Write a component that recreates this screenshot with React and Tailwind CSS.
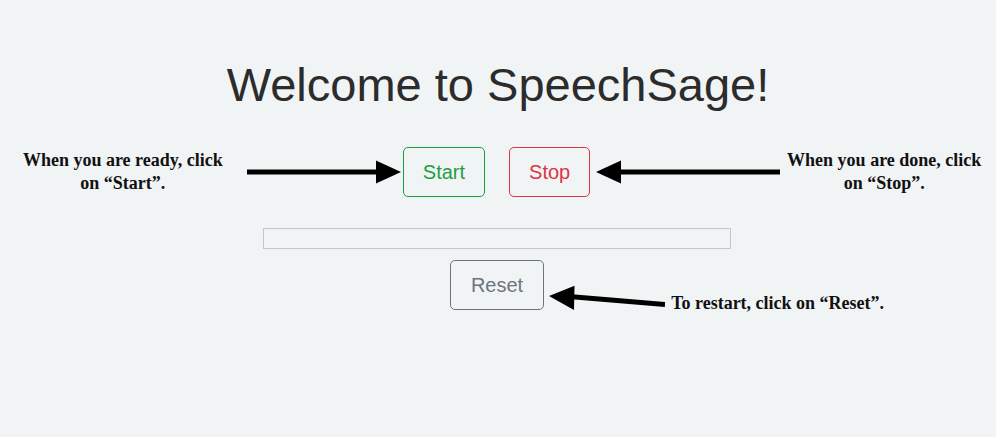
const sans = { fontFamily: '"Liberation Sans", Arial, sans-serif' }

function ArrowRight() {
  return (
    <svg width="154" height="24" viewBox="0 0 154 24" className="block">
      <rect x="0" y="9.5" width="132" height="5" fill="#000" />
      <polygon points="129,0.5 154,12 129,23.5" fill="#000" />
    </svg>
  )
}

function ArrowLeft() {
  return (
    <svg width="184" height="24" viewBox="0 0 184 24" className="block">
      <rect x="22" y="9.5" width="162" height="5" fill="#000" />
      <polygon points="25,0.5 0,12 25,23.5" fill="#000" />
    </svg>
  )
}

function ArrowReset() {
  return (
    <svg width="116" height="26" viewBox="0 0 116 26" className="block">
      <line x1="20" y1="11.6" x2="116" y2="19.5" stroke="#000" strokeWidth="5" />
      <polygon points="0,11 25.5,0.7 25,25" fill="#000" />
    </svg>
  )
}

export default function App() {
  return (
    <div className="min-h-screen w-full bg-[#f1f4f5] pt-[58px]" style={sans}>
      {/* Title */}
      <h1 className="text-center text-[47px] leading-[54px] font-normal text-[#2c2c2c]">
        Welcome to SpeechSage!
      </h1>

      {/* Start / Stop row */}
      <div className="mt-[35px] grid grid-cols-[1fr_auto_1fr] items-center">
        <div className="flex items-center justify-end">
          <p className="w-[200px] text-center font-['Liberation_Serif',serif] text-[18px] font-bold leading-[23px] text-[#111]">
            When you are ready, click on “Start”.
          </p>
          <div className="ml-[24px] mr-[2px]">
            <ArrowRight />
          </div>
        </div>
        <div className="mr-[3px] flex items-center gap-[24px]">
          <button className="h-[50px] rounded-[5px] border border-[#1f9d45] px-[19px] text-[20px] text-[#1f9d45]">
            Start
          </button>
          <button className="h-[50px] rounded-[5px] border border-[#dc3545] px-[19px] text-[20px] text-[#dc3545]">
            Stop
          </button>
        </div>
        <div className="flex items-center">
          <div className="ml-[3px]">
            <ArrowLeft />
          </div>
          <p className="ml-[5px] w-[198px] text-center font-['Liberation_Serif',serif] text-[18px] font-bold leading-[23px] text-[#111]">
            When you are done, click on “Stop”.
          </p>
        </div>
      </div>

      {/* Progress bar */}
      <div className="mx-auto mt-[31px] h-[21px] w-[468px] -translate-x-px border border-[#c6c6c6]" />

      {/* Reset row */}
      <div className="mt-[11px] grid grid-cols-[1fr_auto_1fr] items-start">
        <div />
        <button className="mr-[2px] h-[50px] rounded-[5px] border border-[#6c757d] px-[20px] text-[20px] text-[#6c757d]">
          Reset
        </button>
        <div className="flex items-start">
          <div className="ml-[3px] mt-[25px]">
            <ArrowReset />
          </div>
          <p className="ml-[6px] mt-[32px] whitespace-nowrap font-['Liberation_Serif',serif] text-[18px] font-bold leading-[23px] text-[#111]">
            To restart, click on “Reset”.
          </p>
        </div>
      </div>
    </div>
  )
}
